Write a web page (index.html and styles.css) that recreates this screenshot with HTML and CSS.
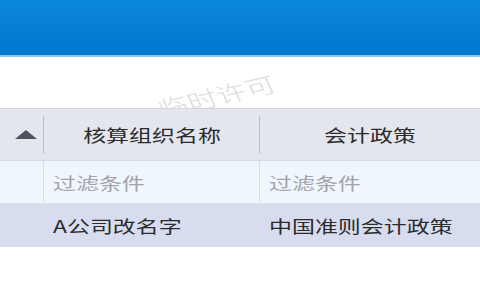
FILE: index.html
```html
<!DOCTYPE html>
<html lang="zh">
<head>
<meta charset="utf-8">
<link rel="stylesheet" href="styles.css">
</head>
<body>
<div class="page">
  <div class="titlebar"></div>
  <div class="spacer"></div>
  <div class="watermark">临时许可</div>
  <div class="grid">
    <div class="hcell first"><span class="sort"></span><span class="sep"></span></div>
    <div class="hcell"><span class="t c">核算组织名称</span><span class="sep"></span></div>
    <div class="hcell last"><span class="t c">会计政策</span></div>

    <div class="cell filter first"></div>
    <div class="cell filter"><span class="t ph">过滤条件</span></div>
    <div class="cell filter last"><span class="t ph">过滤条件</span></div>

    <div class="cell sel first"></div>
    <div class="cell sel"><span class="t">A公司改名字</span></div>
    <div class="cell sel last"><span class="t">中国准则会计政策</span></div>
  </div>
</div>
</body>
</html>
```
FILE: styles.css
```css
html, body {
  margin: 0;
  padding: 0;
  background: #ffffff;
}
.page {
  position: relative;
  width: 480px;
  height: 300px;
  overflow: hidden;
  font-family: "Noto Sans CJK SC", "Noto Sans", sans-serif;
}
.titlebar {
  height: 54px;
  background: linear-gradient(#0b87d9, #0079d1);
  border-bottom: 1px solid #0a70c4;
  box-shadow: 0 2px 0 #8fc6ee;
}
.spacer {
  height: 53px;
}
.watermark {
  position: absolute;
  left: 172px;
  top: 84px;
  width: 88px;
  height: 22px;
  font-size: 22px;
  line-height: 22px;
  font-weight: 300;
  color: #dcdcdc;
  transform: scaleX(1.38) rotate(-18deg);
  transform-origin: center center;
  z-index: 0;
  white-space: nowrap;
}
.grid {
  position: relative;
  z-index: 1;
  display: grid;
  grid-template-columns: 44px 216px 1fr;
  grid-template-rows: 52px 43px 43px;
  border-top: 1px solid #d3d6de;
}
.hcell {
  position: relative;
  background: #e4e6ee;
  border-bottom: 1px solid #d6d9e2;
  display: flex;
  align-items: center;
  justify-content: center;
  color: #2b2b2b;
  font-size: 17px;
}
.sep {
  position: absolute;
  right: -1px;
  top: 7px;
  width: 2px;
  height: 38px;
  background: #b9bcc7;
  border-radius: 1px;
}
.sort {
  width: 0;
  height: 0;
  margin-left: 8px;
  border-left: 11px solid transparent;
  border-right: 11px solid transparent;
  border-bottom: 9px solid #4e5260;
}
.cell {
  display: flex;
  align-items: center;
  padding-left: 9px;
  font-size: 17px;
  color: #2b2b2b;
  border-right: 1px solid #dadeea;
}
.cell.first {
  padding-left: 0;
}
.cell.last {
  border-right: none;
}
.cell.filter {
  background: #eff6fd;
  border-bottom: 1px solid #dfe3ec;
}
.cell.sel {
  background: #d7dcef;
}
.t {
  display: inline-block;
  white-space: nowrap;
  transform: scaleX(1.35);
  transform-origin: left center;
}
.t.c {
  transform-origin: center center;
}
.t.ph {
  color: #a3a3a8;
}
```
